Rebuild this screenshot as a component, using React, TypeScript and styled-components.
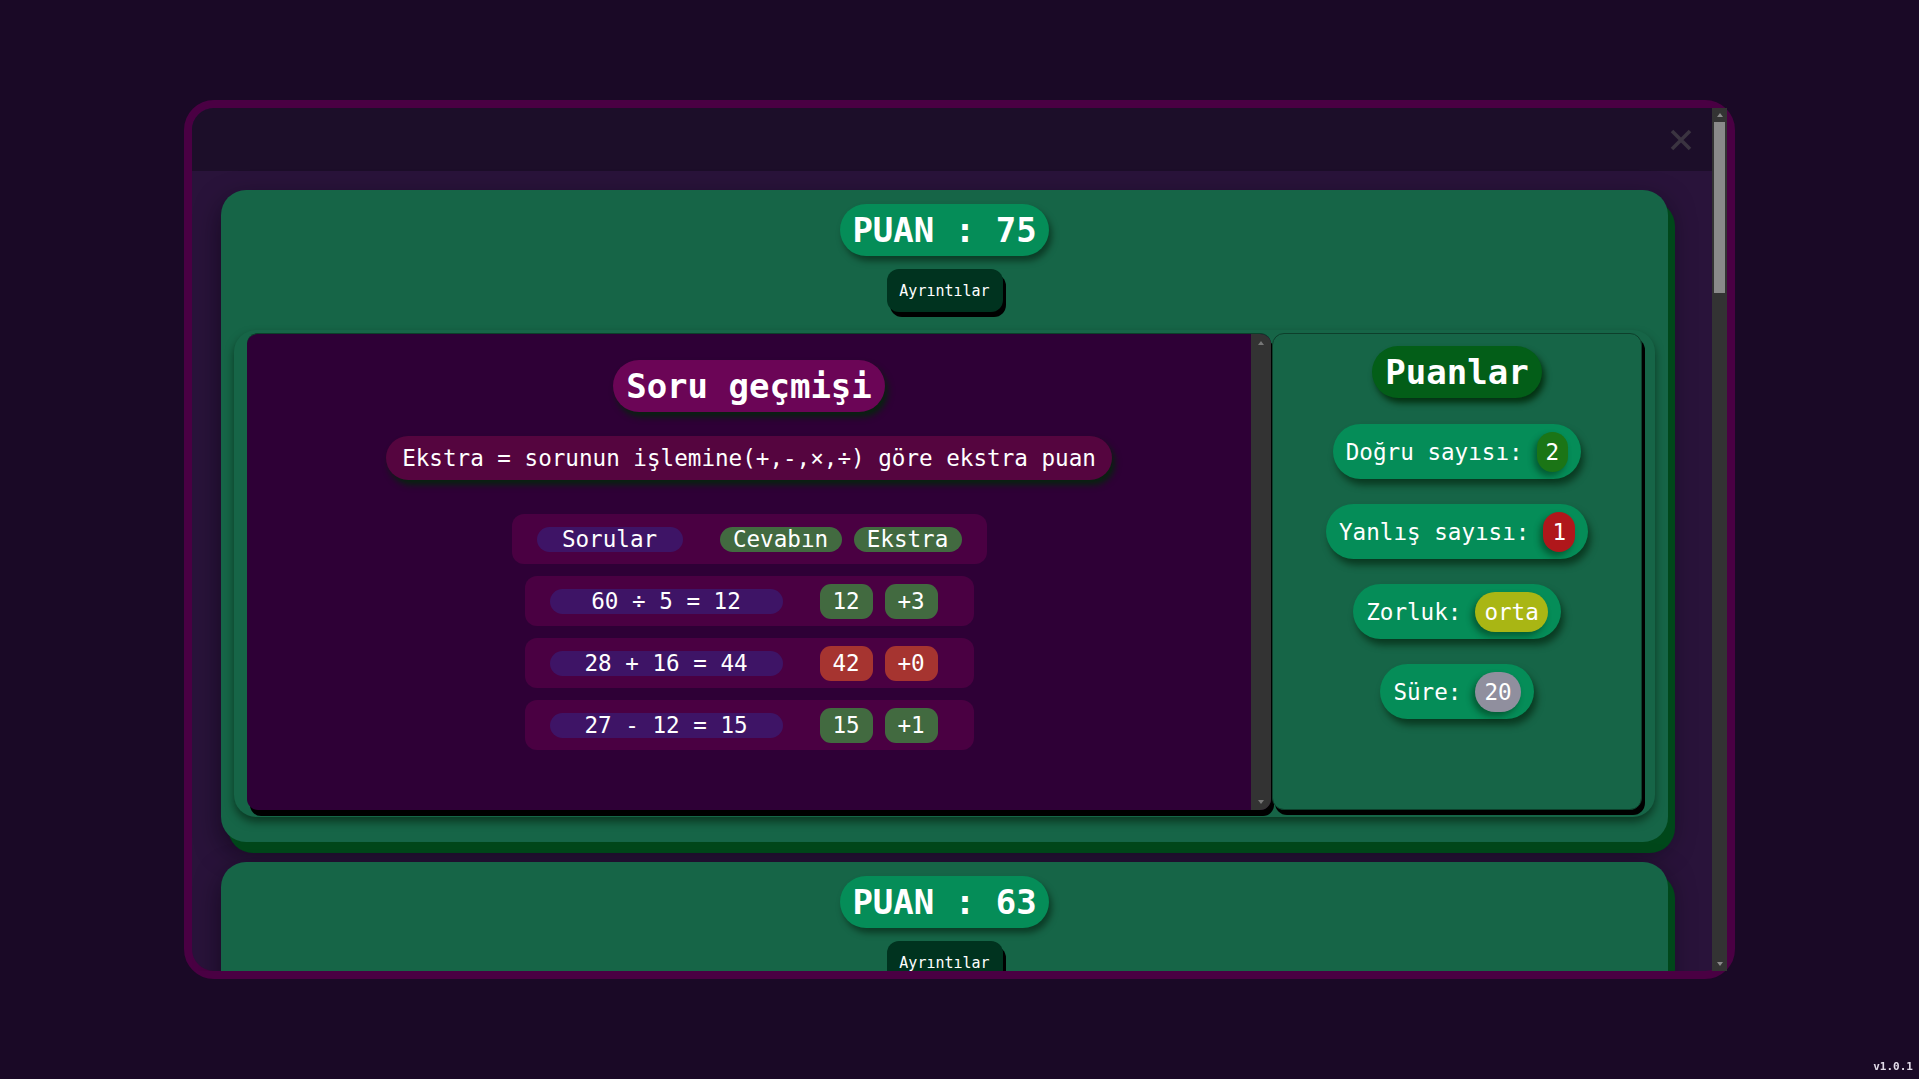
import React from "react";
import styled, { createGlobalStyle } from "styled-components";

const GlobalStyle = createGlobalStyle`
  * { box-sizing: border-box; }
  html, body { margin: 0; padding: 0; height: 100%; background: #1a0926; }
  body {
    font-family: "DejaVu Sans Mono", "Liberation Mono", monospace;
    color: #ffffff;
    overflow: hidden;
  }
  #root { height: 100%; }
`;

const Page = styled.div`
  height: 100vh;
  display: flex;
  align-items: center;
  justify-content: center;
`;

const Modal = styled.div`
  width: 1551px;
  height: 879px;
  border: 8px solid #4a0043;
  border-radius: 30px;
  background: #29133a;
  display: flex;
`;

const Scroller = styled.div`
  flex: 1;
  min-width: 0;
  overflow: hidden;
`;

/* drawn scrollbar (the browser's own is hidden in the capture) */
const ScrollTrack = styled.div<{ $w: number }>`
  width: ${(p) => p.$w}px;
  flex-shrink: 0;
  background: #333333;
  display: flex;
  flex-direction: column;
  align-items: center;
`;

const ScrollArrow = styled.div<{ $h: number }>`
  height: ${(p) => p.$h}px;
  width: 100%;
  flex-shrink: 0;
  display: flex;
  align-items: center;
  justify-content: center;
`;

const ArrowGlyph = styled.span<{ $down?: boolean; $c: string }>`
  width: 0;
  height: 0;
  border-left: 3px solid transparent;
  border-right: 3px solid transparent;
  ${(p) => (p.$down ? `border-top: 4px solid ${p.$c};` : `border-bottom: 4px solid ${p.$c};`)}
`;

const ScrollThumb = styled.div<{ $h: number }>`
  width: calc(100% - 4px);
  height: ${(p) => p.$h}px;
  flex-shrink: 0;
  background: #8a8a8a;
`;

const ScrollRest = styled.div`
  flex: 1;
`;

function ScrollBar({ width, arrow, thumb, color }: { width: number; arrow: number; thumb?: number; color: string }) {
  return (
    <ScrollTrack $w={width}>
      <ScrollArrow $h={arrow}>
        <ArrowGlyph $c={color} />
      </ScrollArrow>
      {thumb ? <ScrollThumb $h={thumb} /> : null}
      <ScrollRest />
      <ScrollArrow $h={arrow}>
        <ArrowGlyph $c={color} $down />
      </ScrollArrow>
    </ScrollTrack>
  );
}

const Header = styled.div`
  height: 63px;
  background: #1c0e29;
  border-top-left-radius: 22px;
  display: flex;
  align-items: center;
  justify-content: flex-end;
  padding-right: 20px;
`;

const CloseButton = styled.button`
  width: 22px;
  height: 22px;
  padding: 0;
  border: none;
  background: transparent;
  display: flex;
  cursor: pointer;
`;

const Body = styled.div`
  display: flex;
  flex-direction: column;
  gap: 20px;
  padding: 19px 44px 40px 29px;
`;

const Card = styled.div<{ $open?: boolean }>`
  background: #166547;
  border-radius: 25px;
  padding: 14px 13px ${(p) => (p.$open ? "25px" : "22px")};
  display: flex;
  flex-direction: column;
  align-items: center;
  box-shadow: 7px 11px 0 #00471a, 0 10px 26px rgba(5, 0, 12, 0.55);
`;

const ScorePill = styled.div`
  height: 52px;
  line-height: 52px;
  padding: 0 12px;
  border-radius: 26px;
  background: #058d58;
  font-size: 34px;
  font-weight: bold;
  white-space: pre;
  box-shadow: 3px 5px 6px rgba(0, 20, 5, 0.5);
`;

const DetailsButton = styled.button`
  margin-top: 13px;
  width: 116px;
  height: 43px;
  flex-shrink: 0;
  border: none;
  border-radius: 12px;
  background: #00331f;
  color: #ffffff;
  font-family: "DejaVu Sans Mono", monospace;
  font-size: 15px;
  box-shadow: 3px 5px 0 #000000;
  cursor: pointer;
`;

const PanelsWrap = styled.div`
  margin-top: 18px;
  align-self: stretch;
  display: flex;
  gap: 1px;
  padding: 3px 13px 7px;
  border-radius: 22px;
  background: #166547;
  box-shadow: 0 5px 9px rgba(0, 20, 5, 0.55);
`;

const HistoryPanel = styled.div`
  flex: 1;
  height: 477px;
  background: #2e0036;
  border-top: 1px solid #0c3f2a;
  border-radius: 11px;
  box-shadow: 3px 6px 0 #000000;
  overflow: hidden;
  display: flex;
`;

const HistoryContent = styled.div`
  flex: 1;
  display: flex;
  flex-direction: column;
  align-items: center;
  padding-top: 26px;
`;

const TitlePill = styled.div<{ $bg: string }>`
  height: 52px;
  line-height: 52px;
  padding: 0 13px;
  border-radius: 26px;
  background: ${(p) => p.$bg};
  font-size: 34px;
  font-weight: bold;
  white-space: pre;
  flex-shrink: 0;
  box-shadow: 3px 5px 6px rgba(0, 40, 8, 0.85);
`;

const InfoPill = styled.div`
  margin-top: 24px;
  height: 44px;
  line-height: 44px;
  padding: 0 16px;
  border-radius: 22px;
  background: #55053f;
  font-size: 22.6px;
  white-space: pre;
  flex-shrink: 0;
  box-shadow: 3px 5px 6px rgba(0, 40, 8, 0.85);
`;

const Table = styled.div`
  margin-top: 34px;
  display: flex;
  flex-direction: column;
  align-items: center;
  gap: 12px;
  flex-shrink: 0;
`;

const TableRow = styled.div<{ $w: number }>`
  width: ${(p) => p.$w}px;
  height: 50px;
  border-radius: 12px;
  background: #4a0042;
  display: flex;
  align-items: center;
  padding-left: 25px;
`;

const Chip = styled.div<{ $w: number; $h: number; $bg: string; $r: number; $ml?: number }>`
  width: ${(p) => p.$w}px;
  height: ${(p) => p.$h}px;
  line-height: ${(p) => p.$h}px;
  margin-left: ${(p) => p.$ml ?? 0}px;
  border-radius: ${(p) => p.$r}px;
  background: ${(p) => p.$bg};
  font-size: 22.6px;
  text-align: center;
  white-space: pre;
`;

const ScorePanel = styled.div`
  width: 370px;
  height: 477px;
  flex-shrink: 0;
  background: #166547;
  border: 1px solid #0d3f2b;
  border-radius: 12px;
  box-shadow: 3px 5px 0 #000000;
  display: flex;
  flex-direction: column;
  align-items: center;
  padding-top: 12px;
`;

const StatList = styled.div`
  margin-top: 26px;
  display: flex;
  flex-direction: column;
  align-items: center;
  gap: 25px;
`;

const StatPill = styled.div`
  height: 55px;
  padding: 0 13px;
  border-radius: 28px;
  background: #058d58;
  display: flex;
  align-items: center;
  gap: 14px;
  font-size: 22.6px;
  white-space: pre;
  box-shadow: 3px 6px 7px rgba(0, 30, 8, 0.6);
`;

const Badge = styled.span<{ $bg: string }>`
  height: 40px;
  line-height: 40px;
  padding: 0 9px;
  border-radius: 20px;
  background: ${(p) => p.$bg};
  box-shadow: -3px 4px 6px rgba(0, 30, 8, 0.45);
`;

const Version = styled.div`
  position: fixed;
  right: 6px;
  bottom: 6px;
  font-family: "DejaVu Sans Mono", monospace;
  font-size: 11px;
  font-weight: bold;
  color: #e2dae8;
`;

const GREEN = "#426a40";
const RED = "#a63430";
const QUESTION = "#3e1466";

const history = [
  { q: "60 ÷ 5 = 12", a: "12", e: "+3", ok: true },
  { q: "28 + 16 = 44", a: "42", e: "+0", ok: false },
  { q: "27 - 12 = 15", a: "15", e: "+1", ok: true },
];

const stats = [
  { label: "Doğru sayısı:", value: "2", bg: "#1b7516" },
  { label: "Yanlış sayısı:", value: "1", bg: "#b0171b" },
  { label: "Zorluk:", value: "orta", bg: "#a9b614" },
  { label: "Süre:", value: "20", bg: "#908f9e" },
];

const scores = [75, 63, 88, 50, 92, 70, 45, 81, 66, 58];

function Details() {
  return (
    <PanelsWrap>
      <HistoryPanel>
        <HistoryContent>
          <TitlePill $bg="#6b0556">Soru geçmişi</TitlePill>
          <InfoPill>Ekstra = sorunun işlemine(+,-,×,÷) göre ekstra puan</InfoPill>
          <Table>
            <TableRow $w={475}>
              <Chip $w={146} $h={25} $r={13} $bg={QUESTION}>Sorular</Chip>
              <Chip $w={122} $h={25} $r={13} $bg={GREEN} $ml={37}>Cevabın</Chip>
              <Chip $w={108} $h={25} $r={13} $bg={GREEN} $ml={12}>Ekstra</Chip>
            </TableRow>
            {history.map((h) => (
              <TableRow $w={449} key={h.q}>
                <Chip $w={233} $h={25} $r={13} $bg={QUESTION}>{h.q}</Chip>
                <Chip $w={53} $h={35} $r={11} $bg={h.ok ? GREEN : RED} $ml={37}>{h.a}</Chip>
                <Chip $w={53} $h={35} $r={11} $bg={h.ok ? GREEN : RED} $ml={12}>{h.e}</Chip>
              </TableRow>
            ))}
          </Table>
        </HistoryContent>
        <ScrollBar width={20} arrow={17} color="#777777" />
      </HistoryPanel>
      <ScorePanel>
        <TitlePill $bg="#035e18">Puanlar</TitlePill>
        <StatList>
          {stats.map((s) => (
            <StatPill key={s.label}>
              <span>{s.label}</span>
              <Badge $bg={s.bg}>{s.value}</Badge>
            </StatPill>
          ))}
        </StatList>
      </ScorePanel>
    </PanelsWrap>
  );
}

export default function App() {
  return (
    <>
      <GlobalStyle />
      <Page>
        <Modal>
          <Scroller>
            <Header>
              <CloseButton aria-label="Kapat">
                <svg width="22" height="22" viewBox="0 0 22 22">
                  <path d="M2 2 L20 20 M20 2 L2 20" stroke="#3b3441" strokeWidth="3.6" strokeLinecap="butt" />
                </svg>
              </CloseButton>
            </Header>
            <Body>
              {scores.map((s, i) => (
                <Card key={i} $open={i === 0}>
                  <ScorePill>{`PUAN : ${s}`}</ScorePill>
                  <DetailsButton>Ayrıntılar</DetailsButton>
                  {i === 0 && <Details />}
                </Card>
              ))}
            </Body>
          </Scroller>
          <ScrollBar width={15} arrow={14} thumb={171} color="#8a8a8a" />
        </Modal>
        <Version>v1.0.1</Version>
      </Page>
    </>
  );
}
